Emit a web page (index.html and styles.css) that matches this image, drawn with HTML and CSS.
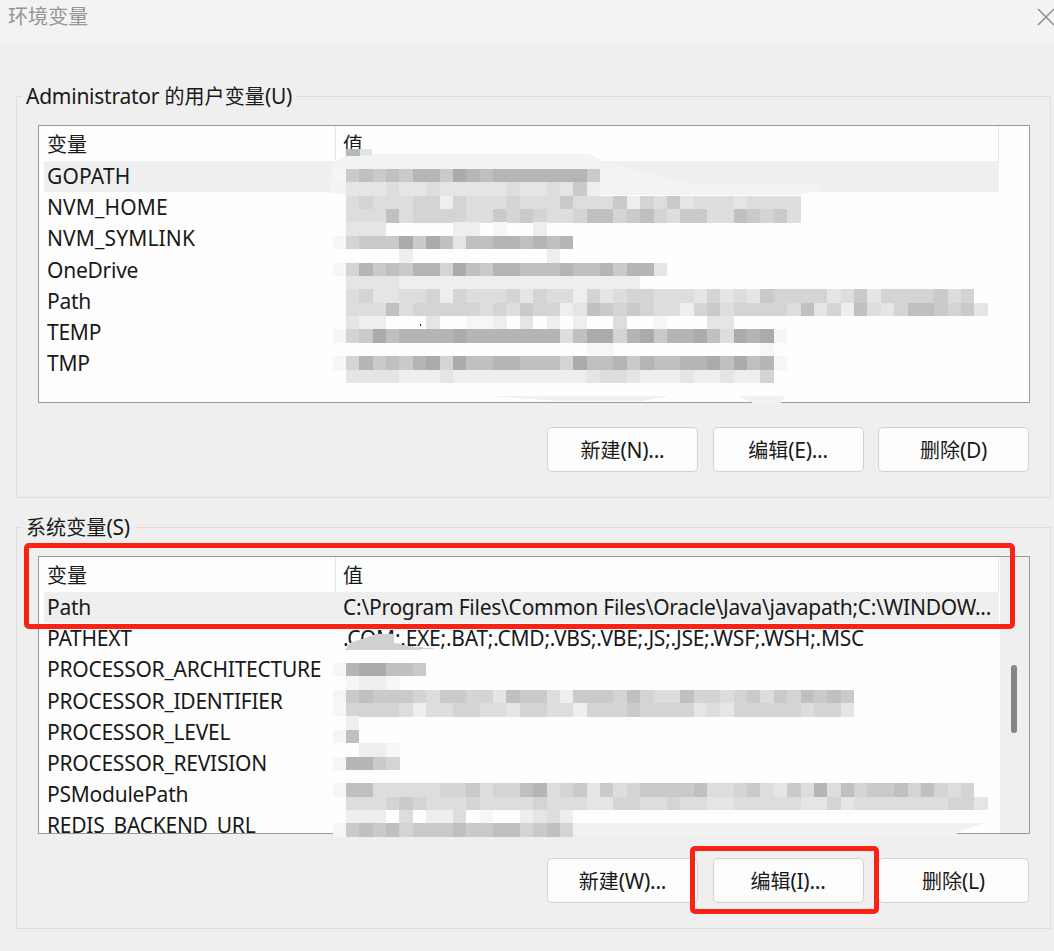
FILE: index.html
```html
<!DOCTYPE html>
<html lang="zh-CN">
<head>
<meta charset="utf-8">
<title>环境变量</title>
<link rel="stylesheet" href="styles.css">
</head>
<body>
<div class="dialog">
  <header class="titlebar">
    <span>环境变量</span>
    <svg class="close" width="18" height="18" viewBox="0 0 18 18"><path d="M1 1L17 17M17 1L1 17"/></svg>
  </header>
  <main class="content">
    <section class="group">
      <h2 class="legend"><span class="latin">Administrator </span>的用户变量<span class="latin">(U)</span></h2>
      <div class="list">
        <div class="row head"><span>变量</span><span>值</span></div>
        <div class="row selected"><span class="loose">GOPATH</span></div>
        <div class="row"><span class="loose">NVM_HOME</span></div>
        <div class="row"><span class="loose">NVM_SYMLINK</span></div>
        <div class="row"><span>OneDrive</span></div>
        <div class="row"><span>Path</span></div>
        <div class="row"><span>TEMP</span></div>
        <div class="row"><span>TMP</span></div>
      </div>
      <div class="actions">
        <button>新建<span class="latin">(N)...</span></button><button>编辑<span class="latin">(E)...</span></button><button>删除<span class="latin">(D)</span></button>
      </div>
      <svg class="mosaic" id="user-mosaic" width="700" height="290" viewBox="330 120 700 290">
        <path fill="#f3f3f3" d="M290 192L336 161L350 154H590L606 163L690 183H820V190L800 195H345L336 193Z"/>
        <path fill="#b5bab7" d="M346 149H360V156H346Z"/>
        <path fill="#dfe5e5" d="M360 149H372V155H360Z"/>
        <path fill="#f1f1f1" d="M490 396H670L645 400.500H550ZM738 396H785L779 405H752V402Z"/>
        <circle cx="420.500" cy="325" r="0.900" fill="#222"/>
      </svg>
    </section>
    <section class="group system">
      <h2 class="legend">系统变量<span class="latin">(S)</span></h2>
      <div class="list">
        <div class="row head"><span>变量</span><span>值</span></div>
        <div class="row selected"><span>Path</span><span>C:\Program Files\Common Files\Oracle\Java\javapath;C:\WINDOW...</span></div>
        <div class="row"><span>PATHEXT</span><span>.COM;.EXE;.BAT;.CMD;.VBS;.VBE;.JS;.JSE;.WSF;.WSH;.MSC</span></div>
        <div class="row"><span>PROCESSOR_ARCHITECTURE</span></div>
        <div class="row"><span>PROCESSOR_IDENTIFIER</span></div>
        <div class="row"><span>PROCESSOR_LEVEL</span></div>
        <div class="row"><span>PROCESSOR_REVISION</span></div>
        <div class="row"><span>PSModulePath</span></div>
        <div class="row"><span>REDIS_BACKEND_URL</span></div>
        <div class="scrollbar"><div class="thumb"></div></div>
      </div>
      <div class="actions">
        <button>新建<span class="latin">(W)...</span></button><button>编辑<span class="latin">(I)...</span></button><button>删除<span class="latin">(L)</span></button>
      </div>
      <svg class="mosaic" id="system-mosaic" width="700" height="290" viewBox="330 551 700 290">
        <path fill="#d0d0d0" d="M345 650L350 643L364 638L378 634H393V643L408 646L438 649L405 650Z"/>
        <path fill="#f0f1f2" d="M570 823H985L957 832V835H570Z"/>
        <path fill="#c8c8c8" d="M345 830H412V836H365Q350 836 345 831Z"/>
      </svg>
      <div class="mark mark-row"></div>
      <div class="mark mark-edit"></div>
    </section>
  </main>
</div>
<script src="mosaic.js"></script>
</body>
</html>
```
FILE: styles.css
```css
* { box-sizing: border-box; }
body {
  margin: 0;
  background: #efefef;
  color: #191919;
  font-family: "Noto Sans", "Noto Sans CJK SC", sans-serif;
  font-size: 20px;
  letter-spacing: 0.1px;
}
.dialog { width: 1054px; height: 951px; overflow: hidden; }
.titlebar {
  display: flex;
  justify-content: space-between;
  height: 42px;
  padding: 0 0 0 8px;
  background: #f3f3f3;
  color: #969696;
  line-height: 34px;
}
.close { margin: 8px -1px 0 0; fill: none; stroke: #8e8e8e; stroke-width: 1.5; }
.content { padding: 54px 3px 0 16px; }
.group {
  position: relative;
  height: 402px;
  margin-bottom: 29px;
  padding: 0 20px 0 21px;
  border: 1px solid #dedede;
}
.legend {
  width: max-content;
  height: 28px;
  margin: 0 0 0 -16px;
  padding: 0 4px;
  font-size: 20px;
  font-weight: 400;
  line-height: 30px;
  position: relative;
  top: -16px;
  background: #efefef;
}
.latin { font-size: 21px; letter-spacing: -0.25px; white-space: pre; }
.list {
  position: relative;
  height: 278px;
  overflow: hidden;
  border: 1px solid #969a98;
  background: #fefefe;
}
.row {
  display: grid;
  grid-template-columns: 296px 1fr;
  width: 955px;
  height: 31.2px;
  margin-left: 5px;
  padding-left: 3px;
  font-size: 21px;
  line-height: 31px;
  letter-spacing: -0.25px;
  white-space: nowrap;
}
.row .loose { letter-spacing: 0.15px; }
.head {
  height: 35px;
  font-size: 20px;
  line-height: 37px;
  letter-spacing: 0.1px;
  border-right: 1px solid #e5e5e5;
  background: linear-gradient(#e5e5e5, #e5e5e5) 291px 0 / 1px 34px no-repeat;
}
.selected { background: #efefef; }
.actions { display: flex; justify-content: flex-end; gap: 14.5px; margin: 24px 1px 0 0; }
button {
  width: 151px;
  height: 45px;
  padding: 0 0 1px;
  border: 1px solid #d2d2d2;
  border-radius: 5px;
  background: #fdfdfd;
  color: inherit;
  font: inherit;
  letter-spacing: 0;
}
.scrollbar {
  position: absolute;
  inset: 0 0 0 auto;
  width: 29px;
  padding: 108px 0 0 11px;
  background: #efefef;
}
.thumb { width: 6px; height: 68px; border-radius: 3px; background: #858585; }
.mosaic { position: absolute; left: 313px; top: 23px; shape-rendering: crispEdges; }
.mark { position: absolute; border: 5px solid #fa2115; border-radius: 5px; }
.mark-row { left: 7px; top: 15px; width: 991px; height: 86px; }
.mark-edit { left: 673px; top: 318px; width: 189px; height: 68px; }
```
FILE: mosaic.js
```js
// Shade index 0 is empty, 9 is the darkest block.
const shades = ["", "#f6f6f6", "#eeeeee", "#e5e5e5", "#dcdddd", "#d3d4d4", "#c9cacb", "#bfc0c1", "#b5b5b6", "#aaabab"];
const cell = 13.37;

function drawMosaic(id, top, rows) {
  const svg = document.getElementById(id);
  rows.forEach((row, r) => {
    [...row].forEach((level, c) => {
      if (level === "0") return;
      const rect = document.createElementNS("http://www.w3.org/2000/svg", "rect");
      rect.setAttribute("x", 346 + c * cell);
      rect.setAttribute("y", top + r * cell);
      rect.setAttribute("width", cell + 0.1);
      rect.setAttribute("height", cell + 0.1);
      rect.setAttribute("fill", shades[level]);
      svg.appendChild(rect);
    });
    if (/[5-9]/.test(row[0])) {
      const edge = document.createElementNS("http://www.w3.org/2000/svg", "rect");
      edge.setAttribute("x", 333);
      edge.setAttribute("y", top + r * cell);
      edge.setAttribute("width", 13);
      edge.setAttribute("height", cell);
      edge.setAttribute("fill", "#f8f6f4");
      svg.appendChild(edge);
    }
  });
}

drawMosaic("user-mosaic", 169, [
  "6767688698788888886",
  "3334334333334334362",
  "4544455254445444644462546344434444",
  "4447455554465654457756754664476564",
  "3330000022010020",
  "56669697377887878",
  "0000200000000002",
  "586768859768877787786883",
  "33332222222222222222220",
  "45334452544453544253455444353436555534635555645",
  "444745555545465523765654425645555473527435776563",
  "322000300112030202004001000330",
  "569788889888888847995896889749891",
  "00000000000000000011000000000001",
  "586768959778877759778687788979781",
  "33332223222222222234432223223225"
]);

drawMosaic("system-mosaic", 663, [
  "899776",
  "12210000",
  "67666546655376642666575447554564657676",
  "55554244554435544255565555343555554553",
  "2",
  "7",
  "0221",
  "8865",
  "0000000",
  "77444445564557845636456666744564364847566757545",
  "444565444544445444335544544334444433534444444553",
  "22204022401002342",
  "67675666766775675"
]);
```
